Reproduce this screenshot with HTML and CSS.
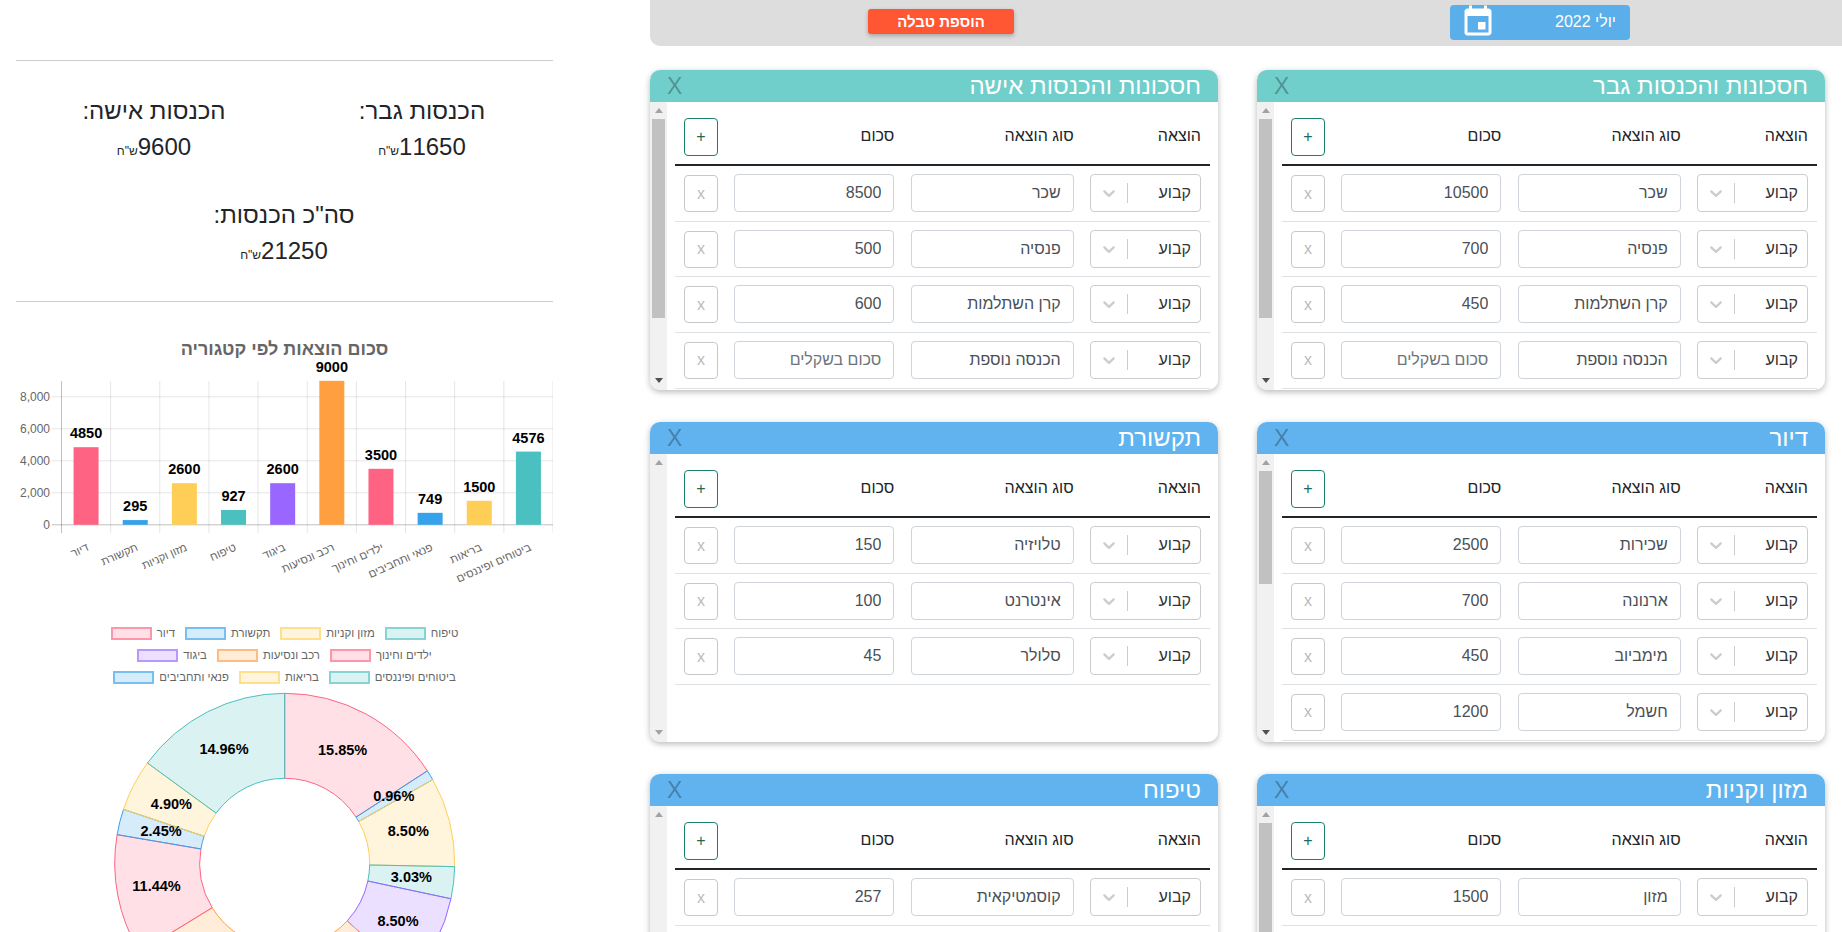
FILE: index.html
```html
<!DOCTYPE html>
<html lang="he" dir="rtl">
<head>
    <meta charset="utf-8">
    <title>תקציב חודשי</title>
    <link rel="stylesheet" href="styles.css">
</head>
<body>
    <svg class="sprite" aria-hidden="true">
        <symbol id="chevron" viewBox="0 0 20 20">
            <path d="M4.516 7.548c0.436-0.446 1.043-0.481 1.576 0l3.908 3.747 3.908-3.747c0.533-0.481 1.141-0.446 1.576 0 0.436 0.445 0.408 1.197 0 1.615-0.406 0.418-4.695 4.502-4.695 4.502-0.217 0.223-0.502 0.335-0.789 0.335s-0.572-0.112-0.791-0.335c0 0-4.287-4.084-4.695-4.502s-0.436-1.17 0-1.615z"/>
        </symbol>
    </svg>

    <main class="main">
        <div class="topbar">
            <div class="date-btn">
                <span class="date-text">יולי 2022</span>
                <svg class="date-icon" viewBox="0 0 24 24"><path d="M17 12h-5v5h5v-5zM16 1v2H8V1H6v2H5c-1.11 0-1.99.9-1.99 2L3 19c0 1.1.89 2 2 2h14c1.1 0 2-.9 2-2V5c0-1.1-.9-2-2-2h-1V1h-2zm3 18H5V8h14v11z"/></svg>
            </div>
            <button class="add-table-btn">הוספת טבלה</button>
        </div>

        <div class="cards">
            <!-- income, man -->
            <section class="card card-teal">
                <header class="card-header"><h2 class="card-title">חסכונות והכנסות גבר</h2><span class="card-close">X</span></header>
                <div class="card-body">
                    <div class="card-table">
                        <div class="row-head">
                            <span>הוצאה</span><span>סוג הוצאה</span><span>סכום</span><button class="add-btn">+</button>
                        </div>
                        <div class="row">
                            <div class="select"><span class="select-value">קבוע</span><span class="select-sep"></span><svg class="chevron"><use href="#chevron"/></svg></div>
                            <input class="field" value="שכר"><input class="field" value="10500"><button class="remove-btn">x</button>
                        </div>
                        <div class="row">
                            <div class="select"><span class="select-value">קבוע</span><span class="select-sep"></span><svg class="chevron"><use href="#chevron"/></svg></div>
                            <input class="field" value="פנסיה"><input class="field" value="700"><button class="remove-btn">x</button>
                        </div>
                        <div class="row">
                            <div class="select"><span class="select-value">קבוע</span><span class="select-sep"></span><svg class="chevron"><use href="#chevron"/></svg></div>
                            <input class="field" value="קרן השתלמות"><input class="field" value="450"><button class="remove-btn">x</button>
                        </div>
                        <div class="row">
                            <div class="select"><span class="select-value">קבוע</span><span class="select-sep"></span><svg class="chevron"><use href="#chevron"/></svg></div>
                            <input class="field" value="הכנסה נוספת"><input class="field" placeholder="סכום בשקלים"><button class="remove-btn">x</button>
                        </div>
                    </div>
                    <div class="scrollbar">
                        <span class="arrow-up"></span><span class="thumb thumb-long"></span><span class="arrow-down"></span>
                    </div>
                </div>
            </section>

            <!-- income, woman -->
            <section class="card card-teal">
                <header class="card-header"><h2 class="card-title">חסכונות והכנסות אישה</h2><span class="card-close">X</span></header>
                <div class="card-body">
                    <div class="card-table">
                        <div class="row-head">
                            <span>הוצאה</span><span>סוג הוצאה</span><span>סכום</span><button class="add-btn">+</button>
                        </div>
                        <div class="row">
                            <div class="select"><span class="select-value">קבוע</span><span class="select-sep"></span><svg class="chevron"><use href="#chevron"/></svg></div>
                            <input class="field" value="שכר"><input class="field" value="8500"><button class="remove-btn">x</button>
                        </div>
                        <div class="row">
                            <div class="select"><span class="select-value">קבוע</span><span class="select-sep"></span><svg class="chevron"><use href="#chevron"/></svg></div>
                            <input class="field" value="פנסיה"><input class="field" value="500"><button class="remove-btn">x</button>
                        </div>
                        <div class="row">
                            <div class="select"><span class="select-value">קבוע</span><span class="select-sep"></span><svg class="chevron"><use href="#chevron"/></svg></div>
                            <input class="field" value="קרן השתלמות"><input class="field" value="600"><button class="remove-btn">x</button>
                        </div>
                        <div class="row">
                            <div class="select"><span class="select-value">קבוע</span><span class="select-sep"></span><svg class="chevron"><use href="#chevron"/></svg></div>
                            <input class="field" value="הכנסה נוספת"><input class="field" placeholder="סכום בשקלים"><button class="remove-btn">x</button>
                        </div>
                    </div>
                    <div class="scrollbar">
                        <span class="arrow-up"></span><span class="thumb thumb-long"></span><span class="arrow-down"></span>
                    </div>
                </div>
            </section>

            <section class="card">
                <header class="card-header"><h2 class="card-title">דיור</h2><span class="card-close">X</span></header>
                <div class="card-body">
                    <div class="card-table">
                        <div class="row-head">
                            <span>הוצאה</span><span>סוג הוצאה</span><span>סכום</span><button class="add-btn">+</button>
                        </div>
                        <div class="row">
                            <div class="select"><span class="select-value">קבוע</span><span class="select-sep"></span><svg class="chevron"><use href="#chevron"/></svg></div>
                            <input class="field" value="שכירות"><input class="field" value="2500"><button class="remove-btn">x</button>
                        </div>
                        <div class="row">
                            <div class="select"><span class="select-value">קבוע</span><span class="select-sep"></span><svg class="chevron"><use href="#chevron"/></svg></div>
                            <input class="field" value="ארנונה"><input class="field" value="700"><button class="remove-btn">x</button>
                        </div>
                        <div class="row">
                            <div class="select"><span class="select-value">קבוע</span><span class="select-sep"></span><svg class="chevron"><use href="#chevron"/></svg></div>
                            <input class="field" value="מימביוב"><input class="field" value="450"><button class="remove-btn">x</button>
                        </div>
                        <div class="row">
                            <div class="select"><span class="select-value">קבוע</span><span class="select-sep"></span><svg class="chevron"><use href="#chevron"/></svg></div>
                            <input class="field" value="חשמל"><input class="field" value="1200"><button class="remove-btn">x</button>
                        </div>
                    </div>
                    <div class="scrollbar">
                        <span class="arrow-up"></span><span class="thumb thumb-short"></span><span class="arrow-down"></span>
                    </div>
                </div>
            </section>

            <section class="card">
                <header class="card-header"><h2 class="card-title">תקשורת</h2><span class="card-close">X</span></header>
                <div class="card-body">
                    <div class="card-table">
                        <div class="row-head">
                            <span>הוצאה</span><span>סוג הוצאה</span><span>סכום</span><button class="add-btn">+</button>
                        </div>
                        <div class="row">
                            <div class="select"><span class="select-value">קבוע</span><span class="select-sep"></span><svg class="chevron"><use href="#chevron"/></svg></div>
                            <input class="field" value="טלויזיה"><input class="field" value="150"><button class="remove-btn">x</button>
                        </div>
                        <div class="row">
                            <div class="select"><span class="select-value">קבוע</span><span class="select-sep"></span><svg class="chevron"><use href="#chevron"/></svg></div>
                            <input class="field" value="אינטרנט"><input class="field" value="100"><button class="remove-btn">x</button>
                        </div>
                        <div class="row">
                            <div class="select"><span class="select-value">קבוע</span><span class="select-sep"></span><svg class="chevron"><use href="#chevron"/></svg></div>
                            <input class="field" value="סלולר"><input class="field" value="45"><button class="remove-btn">x</button>
                        </div>
                    </div>
                    <div class="scrollbar scrollbar-idle">
                        <span class="arrow-up"></span><span class="arrow-down"></span>
                    </div>
                </div>
            </section>

            <section class="card">
                <header class="card-header"><h2 class="card-title">מזון וקניות</h2><span class="card-close">X</span></header>
                <div class="card-body">
                    <div class="card-table">
                        <div class="row-head">
                            <span>הוצאה</span><span>סוג הוצאה</span><span>סכום</span><button class="add-btn">+</button>
                        </div>
                        <div class="row">
                            <div class="select"><span class="select-value">קבוע</span><span class="select-sep"></span><svg class="chevron"><use href="#chevron"/></svg></div>
                            <input class="field" value="מזון"><input class="field" value="1500"><button class="remove-btn">x</button>
                        </div>
                    </div>
                    <div class="scrollbar">
                        <span class="arrow-up"></span><span class="thumb thumb-long"></span><span class="arrow-down"></span>
                    </div>
                </div>
            </section>

            <section class="card">
                <header class="card-header"><h2 class="card-title">טיפוח</h2><span class="card-close">X</span></header>
                <div class="card-body">
                    <div class="card-table">
                        <div class="row-head">
                            <span>הוצאה</span><span>סוג הוצאה</span><span>סכום</span><button class="add-btn">+</button>
                        </div>
                        <div class="row">
                            <div class="select"><span class="select-value">קבוע</span><span class="select-sep"></span><svg class="chevron"><use href="#chevron"/></svg></div>
                            <input class="field" value="קוסמטיקאית"><input class="field" value="257"><button class="remove-btn">x</button>
                        </div>
                    </div>
                    <div class="scrollbar scrollbar-idle">
                        <span class="arrow-up"></span><span class="arrow-down"></span>
                    </div>
                </div>
            </section>
        </div>
    </main>

    <aside class="summary">
        <div class="income">
            <div class="income-item">
                <div class="income-title">הכנסות גבר:</div>
                <div class="income-sum">11650<small>ש"ח</small></div>
            </div>
            <div class="income-item">
                <div class="income-title">הכנסות אישה:</div>
                <div class="income-sum">9600<small>ש"ח</small></div>
            </div>
            <div class="income-item income-total">
                <div class="income-title">סה"כ הכנסות:</div>
                <div class="income-sum">21250<small>ש"ח</small></div>
            </div>
        </div>

        <h3 class="chart-title">סכום הוצאות לפי קטגוריה</h3>
        <svg id="barChart" class="chart" width="537" height="250"></svg>

        <div class="legend">
            <div class="legend-row">
                <span class="legend-item"><i class="box pink"></i>דיור</span>
                <span class="legend-item"><i class="box blue"></i>תקשורת</span>
                <span class="legend-item"><i class="box yellow"></i>מזון וקניות</span>
                <span class="legend-item"><i class="box teal"></i>טיפוח</span>
            </div>
            <div class="legend-row">
                <span class="legend-item"><i class="box purple"></i>ביגוד</span>
                <span class="legend-item"><i class="box orange"></i>רכב ונסיעות</span>
                <span class="legend-item"><i class="box pink"></i>ילדים וחינוך</span>
            </div>
            <div class="legend-row">
                <span class="legend-item"><i class="box blue"></i>פנאי ותחביבים</span>
                <span class="legend-item"><i class="box yellow"></i>בריאות</span>
                <span class="legend-item"><i class="box teal"></i>ביטוחים ופיננסים</span>
            </div>
        </div>
        <svg id="donutChart" class="chart" width="537" height="244"></svg>
    </aside>

    <script src="charts.js"></script>
</body>
</html>
```

FILE: styles.css
```css
html, body {
    height: 100%;
    margin: 0;
    overflow: hidden;
}
body {
    display: flex;
    justify-content: space-between;
    font-family: "Liberation Sans", Arial, sans-serif;
    font-size: 16px;
    color: #212529;
    background-color: #fff;
}
.sprite {
    display: none;
}

/* right side */
.main {
    width: 1192px;
    flex-shrink: 0;
}
.topbar {
    display: flex;
    justify-content: space-between;
    align-items: center;
    height: 46px;
    padding: 0 212px 0 218px;
    box-sizing: border-box;
    background-color: #ddd;
    border-bottom-left-radius: 10px;
}
.date-btn {
    display: flex;
    justify-content: space-between;
    align-items: center;
    width: 180px;
    height: 35px;
    margin-bottom: 2px;
    padding: 0 14px 0 10px;
    box-sizing: border-box;
    background-color: #5aaeea;
    border-radius: 4px;
    color: #fff;
}
.date-icon {
    width: 36px;
    height: 36px;
    fill: #fff;
}
.add-table-btn {
    width: 146px;
    height: 25px;
    margin-bottom: 3px;
    padding: 0;
    border: none;
    border-radius: 3px;
    background-color: #ff5733;
    box-shadow: 0 2px 4px rgba(0,0,0,0.25);
    color: #fff;
    font-family: inherit;
    font-size: 15px;
    font-weight: bold;
}
.cards {
    display: grid;
    grid-template-columns: 568px 568px;
    justify-content: space-between;
    row-gap: 32px;
    padding: 24px 17px 0 0;
}
.card {
    display: flex;
    flex-direction: column;
    height: 320px;
    border-radius: 10px;
    overflow: hidden;
    background-color: #fff;
    box-shadow: 0 2px 6px rgba(0,0,0,0.28);
}
.card-header {
    display: flex;
    justify-content: space-between;
    align-items: center;
    height: 32px;
    flex-shrink: 0;
    padding: 0 17px;
    background-color: #60b3ee;
}
.card-teal .card-header {
    background-color: #70cecb;
}
.card-title {
    margin: 0;
    color: #fff;
    font-size: 24px;
    font-weight: normal;
}
.card-close {
    color: rgba(0,0,0,0.3);
    font-size: 23px;
}
.card-body {
    display: flex;
    flex: 1;
    min-height: 0;
}
.card-table {
    flex: 1;
    padding: 16px 8px 0;
}
.row-head, .row {
    display: grid;
    grid-template-columns: 111px 163px 160px 34px;
    justify-content: space-between;
    padding: 0 9px;
}
.row-head {
    align-items: center;
    padding-bottom: 8px;
    border-bottom: 2px solid #212529;
}
.row-head span {
    margin-bottom: 2px;
}
.row {
    box-sizing: border-box;
    height: 55.67px;
    padding-top: 8px;
    border-bottom: 1px solid #dee2e6;
}
.select {
    display: flex;
    justify-content: space-between;
    align-items: center;
    height: 38px;
    box-sizing: border-box;
    padding-right: 9px;
    border: 1px solid #ccc;
    border-radius: 4px;
    color: #333;
}
.select-value {
    flex: 1;
}
.select-sep {
    width: 1px;
    height: 20px;
    background-color: #ccc;
}
.chevron {
    width: 20px;
    height: 20px;
    margin: 0 8px;
    fill: #ccc;
}
.field {
    width: 100%;
    height: 38px;
    box-sizing: border-box;
    padding: 6px 12px;
    border: 1px solid #ced4da;
    border-radius: 4px;
    color: #495057;
    font-family: inherit;
    font-size: 16px;
}
.field::placeholder {
    color: #6c757d;
}
.add-btn, .remove-btn {
    width: 34px;
    padding: 0;
    background-color: #fff;
    border-radius: 4px;
    font-family: inherit;
    font-size: 16px;
}
.add-btn {
    height: 38px;
    border: 1px solid #1d8068;
    color: #1d6a58;
}
.remove-btn {
    height: 37px;
    margin-top: 1px;
    border: 1px solid #c8c8c8;
    color: #bbb;
}

/* drawn scrollbar, sits on the left in rtl */
.scrollbar {
    display: flex;
    flex-direction: column;
    align-items: center;
    width: 17px;
    flex-shrink: 0;
    background-color: #f1f1f1;
}
.arrow-up, .arrow-down {
    width: 0;
    height: 0;
    border-left: 4px solid transparent;
    border-right: 4px solid transparent;
}
.arrow-up {
    margin: 6px 0;
    border-bottom: 5px solid #a3a3a3;
}
.arrow-down {
    margin: auto 0 7px;
    border-top: 5px solid #505050;
}
.scrollbar-idle .arrow-down {
    border-top-color: #a3a3a3;
}
.thumb {
    width: 13px;
    background-color: #c1c1c1;
}
.thumb-long {
    height: 199px;
}
.thumb-short {
    height: 113px;
}

/* left side */
.summary {
    width: 537px;
    flex-shrink: 0;
    margin-left: 16px;
    padding-top: 60px;
}
.income {
    display: grid;
    grid-template-columns: 268px 268px;
    justify-content: center;
    padding: 32px 0 33px 7px;
    border-top: 1px solid #ccc;
    border-bottom: 1px solid #ccc;
    text-align: center;
}
.income-item {
    margin-bottom: 33px;
}
.income-total {
    grid-column: 1 / span 2;
    margin: 0 8px 0 0;
}
.income-title, .income-sum {
    font-size: 24px;
    line-height: 35px;
}
.income-title {
    height: 36px;
}
.income-sum {
    height: 35px;
}
.income-sum small {
    font-size: 12px;
}
.chart-title {
    margin: 36px 0 0;
    color: #666;
    font-size: 18px;
    line-height: 22px;
    text-align: center;
}
.chart {
    display: block;
    direction: ltr;
    font-family: "Liberation Sans", Arial, sans-serif;
}
.legend {
    margin-top: 12px;
    color: #666;
    font-size: 11.4px;
    direction: ltr;
}
.legend-row {
    display: flex;
    justify-content: center;
    align-items: center;
    gap: 10px;
    height: 22px;
}
.legend-item {
    display: flex;
    align-items: center;
    gap: 5px;
}
.box {
    display: block;
    width: 41px;
    height: 13px;
    box-sizing: border-box;
    border: 2px solid;
}
.pink { background-color: rgba(255,99,132,0.2); border-color: rgba(255,99,132,0.6); }
.blue { background-color: rgba(54,162,235,0.2); border-color: rgba(54,162,235,0.6); }
.yellow { background-color: rgba(255,206,86,0.2); border-color: rgba(255,206,86,0.6); }
.teal { background-color: rgba(75,192,192,0.2); border-color: rgba(75,192,192,0.6); }
.purple { background-color: rgba(153,102,255,0.2); border-color: rgba(153,102,255,0.6); }
.orange { background-color: rgba(255,159,64,0.2); border-color: rgba(255,159,64,0.6); }
```

FILE: charts.js
```js
const SVG_NS = 'http://www.w3.org/2000/svg';

const labels = ['דיור', 'תקשורת', 'מזון וקניות', 'טיפוח', 'ביגוד', 'רכב ונסיעות', 'ילדים וחינוך', 'פנאי ותחביבים', 'בריאות', 'ביטוחים ופיננסים'];
const values = [4850, 295, 2600, 927, 2600, 9000, 3500, 749, 1500, 4576];
const colors = ['255,99,132', '54,162,235', '255,206,86', '75,192,192', '153,102,255', '255,159,64', '255,99,132', '54,162,235', '255,206,86', '75,192,192'];

function add(svg, tag, attrs, text) {
    const el = document.createElementNS(SVG_NS, tag);
    for (const key in attrs) el.setAttribute(key, attrs[key]);
    if (text !== undefined) el.textContent = text;
    svg.appendChild(el);
    return el;
}

function drawBars(svg) {
    const left = 45.5, right = 537, top = 21, zero = 164.8, bottom = 173;
    const step = (right - left) / labels.length;
    const scale = 0.016;
    const gridColor = 'rgba(0,0,0,0.1)';

    // grid and y axis
    for (let v = 0; v <= 8000; v += 2000) {
        const y = zero - v * scale;
        add(svg, 'line', {x1: 36, x2: right, y1: y, y2: y, stroke: v === 0 ? 'rgba(0,0,0,0.25)' : gridColor});
        add(svg, 'text', {x: 34, y: y + 4, 'text-anchor': 'end', 'font-size': 12, fill: '#666'}, v.toLocaleString('en-US'));
    }
    for (let i = 0; i <= labels.length; i++) {
        const x = left + i * step;
        add(svg, 'line', {x1: x, x2: x, y1: top, y2: bottom, stroke: i === 0 ? 'rgba(0,0,0,0.25)' : gridColor});
    }

    // bars, value on top, slanted label below
    values.forEach(function (v, i) {
        const cx = left + (i + 0.5) * step;
        const y = zero - v * scale;
        add(svg, 'rect', {x: cx - 12.5, y: y, width: 25, height: zero - y, fill: 'rgb(' + colors[i] + ')'});
        add(svg, 'text', {x: cx, y: y - 9, 'text-anchor': 'middle', 'font-size': 14.5, 'font-weight': 'bold', fill: '#000'}, v);
        const lx = cx + 3.5, ly = 190;
        add(svg, 'text', {x: lx, y: ly, 'text-anchor': 'end', 'font-size': 11.3, fill: '#666', transform: 'rotate(-24 ' + lx + ' ' + ly + ')'}, labels[i]);
    });
}

function drawDonut(svg) {
    const cx = 268.7, cy = 175.3, R = 170, r = 85;
    const height = svg.getAttribute('height');
    const total = values.reduce(function (a, b) { return a + b; }, 0);
    const point = function (radius, a) {
        return (cx + radius * Math.sin(a)).toFixed(2) + ' ' + (cy - radius * Math.cos(a)).toFixed(2);
    };
    let start = 0;
    const captions = [];
    values.forEach(function (v, i) {
        const end = start + v / total * Math.PI * 2;
        const large = end - start > Math.PI ? 1 : 0;
        const d = 'M' + point(r, start) + ' L' + point(R, start) +
            ' A' + R + ' ' + R + ' 0 ' + large + ' 1 ' + point(R, end) +
            ' L' + point(r, end) +
            ' A' + r + ' ' + r + ' 0 ' + large + ' 0 ' + point(r, start) + 'Z';
        add(svg, 'path', {d: d, fill: 'rgba(' + colors[i] + ',0.2)', stroke: 'rgb(' + colors[i] + ')'});
        captions.push({mid: (start + end) / 2, share: v / total * 100});
        start = end;
    });
    captions.forEach(function (c) {
        const mr = (R + r) / 2;
        const y = cy - mr * Math.cos(c.mid) + 4;
        if (y > height) return; // slice caption below the chart's visible part
        // the six character captions sit a little to the left
        const x = cx + mr * Math.sin(c.mid) - (c.share >= 10 ? 3 : 0);
        add(svg, 'text', {
            x: x, y: y, 'text-anchor': 'middle', 'font-size': 14.5, 'font-weight': 'bold', fill: '#000'
        }, c.share.toFixed(2) + '%');
    });
}

drawBars(document.getElementById('barChart'));
drawDonut(document.getElementById('donutChart'));
```
